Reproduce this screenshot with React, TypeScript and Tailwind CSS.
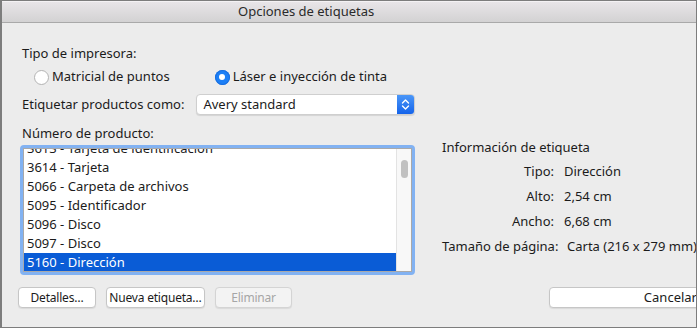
import React, { useLayoutEffect, useRef } from "react";

const products = [
  "3613 - Tarjeta de identificación",
  "3614 - Tarjeta",
  "5066 - Carpeta de archivos",
  "5095 - Identificador",
  "5096 - Disco",
  "5097 - Disco",
  "5160 - Dirección",
];

function Radio({ checked, label }: { checked?: boolean; label: string }) {
  return (
    <div className="flex items-center gap-[3px]">
      {checked ? (
        <span className="w-[15px] h-[15px] rounded-full bg-[#1c7ff6] flex items-center justify-center shadow-[inset_0_0_0_1px_#1a6fe0]">
          <span className="w-[6px] h-[6px] rounded-full bg-white" />
        </span>
      ) : (
        <span className="w-[15px] h-[15px] rounded-full bg-white border border-[#b3b3b3]" />
      )}
      <span>{label}</span>
    </div>
  );
}

function Button({ children, disabled, className = "" }: { children: React.ReactNode; disabled?: boolean; className?: string }) {
  return (
    <button
      className={
        "h-[21px] shrink-0 rounded-[4px] border leading-none shadow-[0_1px_1px_rgba(0,0,0,0.08)] " +
        (disabled
          ? "bg-[#f3f3f3] border-[#d4d4d4] text-[#a6a6a6] "
          : "bg-white border-[#c6c6c6] text-[#1b1b1b] ") +
        className
      }
    >
      {children}
    </button>
  );
}

export default function App() {
  const listRef = useRef<HTMLDivElement | null>(null);

  // list is scrolled a little, the first row is half hidden
  useLayoutEffect(() => {
    if (listRef.current) listRef.current.scrollTop = 10;
  }, []);

  return (
    <div
      className="w-[697px] h-[328px] overflow-hidden bg-[#ececec] border-l-2 border-t border-r border-b border-[#7d7d7d] text-[13px] text-[#1b1b1b] flex flex-col"
      style={{ fontFamily: '"Noto Sans", "Open Sans", sans-serif' }}
    >
      {/* title bar */}
      <div className="h-[22px] shrink-0 border-b border-[#a9a9a9] bg-gradient-to-b from-[#e8e5e8] to-[#d3d2d3] border-t border-t-[#f4f2f4] flex items-center pl-[236px] text-[13px] text-[#2a2a2a]">
        Opciones de etiquetas
      </div>

      <div className="flex-1 flex flex-col pl-[20px]">
        <div className="flex">
          {/* left column */}
          <div className="w-[395px] shrink-0 flex flex-col">
            <div className="h-[18px] leading-[18px] mt-[21px]">Tipo de impresora:</div>
            <div className="flex items-center h-[18px] mt-[6px] pl-[12px]">
              <Radio label="Matricial de puntos" />
              <div className="ml-[45px]">
                <Radio checked label="Láser e inyección de tinta" />
              </div>
            </div>
            <div className="flex items-center mt-[8px]">
              <span>Etiquetar productos como:</span>
              <div className="ml-[12px] w-[219px] h-[21px] flex rounded-[4px] bg-white border border-[#cfcfcf] shadow-[0_1px_1px_rgba(0,0,0,0.1)] overflow-hidden">
                <div className="flex-1 pl-[6px] flex items-center">Avery standard</div>
                <div className="w-[17px] bg-gradient-to-b from-[#4a96f8] to-[#1463ea] flex items-center justify-center">
                  <svg width="9" height="13" viewBox="0 0 9 13" fill="none" stroke="white" strokeWidth="1.4" strokeLinecap="round" strokeLinejoin="round">
                    <path d="M1.5 5 L4.5 2 L7.5 5" />
                    <path d="M1.5 8 L4.5 11 L7.5 8" />
                  </svg>
                </div>
              </div>
            </div>
            <div className="h-[18px] leading-[18px] mt-[9px]">Número de producto:</div>
            <div className="mt-[3px] -ml-[2px] w-[395px] h-[130px] rounded-[4px] border-[3px] border-[#82b2f2]">
              <div className="w-full h-full border border-[#a9a9a9] bg-white flex overflow-hidden">
                <div ref={listRef} className="flex-1 overflow-hidden">
                  {products.map((p, i) => {
                    const sel = i === products.length - 1;
                    return (
                      <div
                        key={p}
                        className={
                          "h-[19px] leading-[19px] pl-[3px] whitespace-nowrap " +
                          (sel ? "bg-[#0a5cd6] text-white" : "")
                        }
                      >
                        {p}
                      </div>
                    );
                  })}
                </div>
                <div className="w-[15px] border-l border-[#e3e3e3] bg-[#f8f8f8] flex justify-center">
                  <div className="mt-[11px] w-[7px] h-[18px] rounded-full bg-[#c1c1c1]" />
                </div>
              </div>
            </div>
          </div>

          {/* right column */}
          <div className="ml-[25px] flex flex-col pt-[115px] whitespace-nowrap">
            <div className="h-[18px] leading-[18px]">Información de etiqueta</div>
            <div className="grid grid-cols-[112px_auto] gap-x-[10px] gap-y-[7px] mt-[6px]">
              <div className="text-right h-[18px] leading-[18px]">Tipo:</div>
              <div className="h-[18px] leading-[18px]">Dirección</div>
              <div className="text-right h-[18px] leading-[18px]">Alto:</div>
              <div className="h-[18px] leading-[18px]">2,54 cm</div>
              <div className="text-right h-[18px] leading-[18px]">Ancho:</div>
              <div className="h-[18px] leading-[18px]">6,68 cm</div>
              <div className="text-right h-[18px] leading-[18px]">Tamaño de página:</div>
              <div className="h-[18px] leading-[18px] pl-[3px]">Carta (216 x 279 mm)</div>
            </div>
          </div>
        </div>

        {/* buttons */}
        <div className="flex mt-[12px] -ml-[4px] whitespace-nowrap">
          <Button className="w-[78px] text-[12px] tracking-[-0.2px]">Detalles…</Button>
          <Button className="w-[99px] ml-[10px] text-[12px] tracking-[-0.2px]">Nueva etiqueta…</Button>
          <Button disabled className="w-[77px] ml-[10px] text-[12px] tracking-[-0.2px]">Eliminar</Button>
          <Button className="w-[170px] ml-[257px] text-right pr-[21px] text-[13px]">Cancelar</Button>
        </div>
      </div>
    </div>
  );
}
